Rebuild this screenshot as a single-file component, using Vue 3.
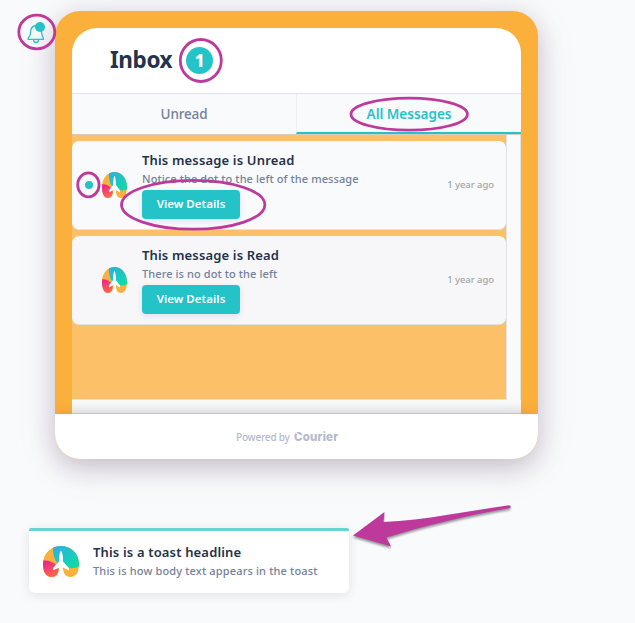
<script setup>
const messages = [
  { title: 'This message is Unread', body: 'Notice the dot to the left of the message', unread: true },
  { title: 'This message is Read', body: 'There is no dot to the left', unread: false },
]
</script>

<template>
  <main class="page">
    <svg class="symbols" aria-hidden="true">
      <defs>
        <linearGradient id="sky" x1="0" y1="0" x2="1" y2="1">
          <stop offset="0.1" stop-color="#2cb2e0" /><stop offset="0.9" stop-color="#0cdca6" />
        </linearGradient>
        <linearGradient id="rose" x1="0.3" y1="0" x2="0.7" y2="1">
          <stop offset="0.1" stop-color="#ea2a86" /><stop offset="0.9" stop-color="#ff6848" />
        </linearGradient>
        <clipPath id="lungs">
          <path d="M18 0C27.500 0 36 7 36 18C36 26 33 31 27.500 31C23 31 20.500 28 20 23H16C15.500 28 13 31 8.500 31C3 31 0 26 0 18C0 7 8.500 0 18 0Z" />
        </clipPath>
        <symbol id="mark" viewBox="0 0 36 31" preserveAspectRatio="none">
          <g clip-path="url(#lungs)">
            <rect width="36" height="31" fill="#fbb03b" />
            <path d="M10 0H36V20.500Q30 23.500 21 21L15 18Q9 11 10 0Z" fill="url(#sky)" />
            <path d="M0 14.500Q9 14 14 20Q17 25 14 31H0Z" fill="url(#rose)" />
          </g>
          <path d="M18 4.500Q20 7 20 15.500L26 22V24.500L19.900 21.500L19.500 24L20.500 31H15.500L16.500 24L16.100 21.500L10 24.500V22L16 15.500Q16 7 18 4.500Z" fill="#fff" />
        </symbol>
      </defs>
    </svg>

    <section class="panel">
      <div class="inbox">
        <header class="head"><h1>Inbox</h1><span class="count">1</span></header>
        <nav class="tabs">
          <div class="tab"><span>Unread</span></div>
          <div class="tab active"><span>All Messages</span></div>
        </nav>
        <div class="list">
          <article v-for="m in messages" :key="m.title" class="card" :class="{ read: !m.unread }">
            <div class="dot-box"><i v-if="m.unread" class="dot"></i></div>
            <svg class="avatar"><use href="#mark" /></svg>
            <div class="copy">
              <h2>{{ m.title }}</h2>
              <p>{{ m.body }}</p>
              <button>View Details</button>
            </div>
            <time>1 year ago</time>
          </article>
        </div>
        <div class="fade"></div>
      </div>
      <footer class="foot"><span class="powered">Powered by</span><span class="brand">Courier</span></footer>
    </section>

    <aside class="toast">
      <svg class="toast-logo"><use href="#mark" /></svg>
      <div class="toast-copy">
        <h2>This is a toast headline</h2>
        <p>This is how body text appears in the toast</p>
      </div>
    </aside>

    <svg class="notes" viewBox="0 0 635 623" aria-hidden="true">
      <g fill="none" stroke="#24c3c8" stroke-width="1.300" stroke-linejoin="round">
        <path d="M36 25.500C32 26 30.500 29 30.500 32.500C30.500 36.500 28 37 28 39.300H43.500C43.500 37 41.500 36 41.500 32V29" />
        <path d="M33.500 39.500Q33.500 42.500 36 42.500T38.500 39.500" />
      </g>
      <circle cx="40" cy="27" r="5" fill="#24c3c8" />
      <g fill="none" stroke="#bd3a9c" stroke-width="2.800">
        <ellipse cx="36.800" cy="32" rx="18" ry="16.800" />
        <ellipse cx="200.800" cy="60.500" rx="20.500" ry="21" />
        <ellipse cx="409.200" cy="114.200" rx="58.200" ry="16" />
        <ellipse cx="88.400" cy="184.800" rx="10.700" ry="12" />
        <ellipse cx="193.200" cy="204.800" rx="71.700" ry="24.400" />
      </g>
      <path class="arrow" d="M353 535.500L384.500 512L383.500 522C425 520 468 511 509 505.200Q511 505 510.500 508C470 515 427 525 386.500 537.500L391 546.500Z" fill="#bd3a9c" />
    </svg>
  </main>
</template>

<style>
body { margin: 0; background: #f9fafc; }
</style>

<style scoped>
.page { position: relative; box-sizing: border-box; width: 635px; height: 623px; padding: 11px 0 0 29px; overflow: hidden; background: #f9fafc; font-family: "Noto Sans", "Open Sans", sans-serif; color: #24324b; }
.symbols { position: absolute; width: 0; height: 0; }
h1, h2, p { margin: 0; white-space: nowrap; }
.panel { margin-left: 26px; width: 483px; height: 448px; border-radius: 25px; overflow: hidden; background: #fbb03b; box-shadow: 0 8px 24px rgba(65, 25, 60, .22), 0 8px 45px rgba(50, 40, 60, .08); }
.inbox { box-sizing: border-box; margin: 0 17px; padding-top: 17px; height: 403px; }
.head { display: flex; align-items: center; gap: 14px; height: 65px; padding-left: 38px; border-radius: 25px 25px 0 0; background: #fff; }
h1 { padding-bottom: 2px; font-size: 22.500px; line-height: 32px; font-weight: 700; letter-spacing: -.4px; }
.count { display: flex; align-items: center; justify-content: center; box-sizing: border-box; width: 27px; height: 27px; padding-bottom: 1px; border-radius: 50%; background: #24c3c8; color: #fff; font-size: 17px; font-weight: 800; }
.tabs { display: flex; box-sizing: border-box; height: 42px; border-top: 1px solid #dfe3ea; border-bottom: 1px solid #d6cdbf; background: #f9fafc; }
.tab { flex: 1; display: flex; align-items: center; justify-content: center; box-sizing: border-box; padding-bottom: 1px; color: #73819b; font-size: 13.500px; font-weight: 500; letter-spacing: -.15px; }
.tab.active { padding: 1px 0 0; border-left: 1px solid #eceff3; border-bottom: 2px solid #24c3c8; color: #24c3c8; font-weight: 650; letter-spacing: 0; }
.list { box-sizing: border-box; width: 435px; height: 265px; padding-top: 6px; display: flex; flex-direction: column; gap: 6px; background: #fcc069; border-right: 1px solid #e1e3e6; border-bottom: 1px solid #e1e3e6; box-shadow: 13px 0 #fafafa, 14px 0 #e1e3e6; }
.card { display: flex; align-items: center; box-sizing: border-box; height: 89px; padding-right: 12px; border-radius: 7px; background: #f9fafc; border-bottom: 1px solid #dfe2e7; }
.card.read { background: #f7f7fa; }
.dot-box { width: 30px; padding-left: 13px; box-sizing: border-box; }
.dot { display: block; width: 8px; height: 8px; border-radius: 50%; background: #24c3c8; }
.avatar { width: 25px; height: 26px; }
.copy { flex: 1; align-self: flex-start; padding: 10px 0 0 15px; }
h2 { font-size: 13px; line-height: 19px; font-weight: 570; letter-spacing: .16px; }
p { color: #73819b; font-size: 11px; line-height: 18px; font-weight: 500; letter-spacing: .09px; }
.toast p { letter-spacing: .155px; }
button { display: block; width: 98px; height: 29px; margin-top: 2px; padding: 0 0 2px; border: 0; border-radius: 4px; background: #24c3c8; color: #fff; font: 600 11.500px "Noto Sans", sans-serif; letter-spacing: .04px; box-shadow: 0 2px 6px rgba(50, 60, 80, .12); }
time { padding-bottom: 2px; color: #a3a5a9; font-size: 9.500px; font-weight: 500; letter-spacing: -.07px; }
.fade { box-sizing: border-box; height: 14px; background: linear-gradient(#fafafa, #eeeff1); border-bottom: 1px solid #d3d0db; }
.foot { display: flex; align-items: center; box-sizing: border-box; height: 45px; padding: 0 0 0 181px; gap: 4px; background: #fff; color: #b4bacb; box-shadow: 0 -1px 10px rgba(70, 60, 90, .16); }
.powered { width: 54px; white-space: nowrap; font-size: 10px; font-weight: 500; letter-spacing: -.2px; }
.brand { position: relative; font: 800 11.500px "Inter", sans-serif; letter-spacing: .2px; }
.brand::after { content: ""; position: absolute; left: 2px; top: 1px; width: 1px; height: 4px; background: #fff; transform: rotate(-45deg); }
.toast { display: flex; align-items: center; box-sizing: border-box; width: 320px; height: 65px; margin-top: 69px; padding: 0 14px 1px; gap: 14px; border-top: 3px solid #67d4d6; border-radius: 2px 2px 6px 6px; background: #fff; box-shadow: 0 2px 12px rgba(0, 0, 0, .1); }
.toast-logo { width: 36px; height: 31px; }
.notes { position: absolute; inset: 0; width: 635px; height: 623px; pointer-events: none; }
.arrow { filter: drop-shadow(0 2px 1px rgba(0, 0, 0, .4)); }
</style>
